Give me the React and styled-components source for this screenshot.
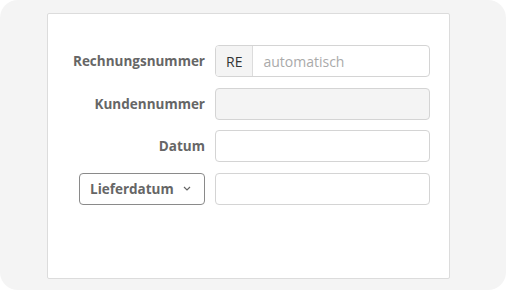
import React from "react";
import styled, { createGlobalStyle } from "styled-components";

const Global = createGlobalStyle`
  html, body { margin: 0; padding: 0; background: #fff; }
  body { font-family: "Open Sans", "Liberation Sans", sans-serif; }
  * { box-sizing: border-box; }
`;

const Frame = styled.div`
  width: 506px;
  height: 290px;
  background: #f4f4f4;
  border-radius: 18px;
  padding: 13px 56px 11px 47px;
`;

const Card = styled.div`
  height: 100%;
  background: #fff;
  border: 1px solid #dcdcdc;
  border-radius: 2px;
  padding: 31px 19px 0 31px;
`;

const Form = styled.div`
  display: grid;
  grid-template-columns: 126px 215px;
  column-gap: 10px;
  row-gap: 10.6px;
  align-items: center;
`;

const Label = styled.label`
  justify-self: end;
  font-size: 13.5px;
  font-weight: 700;
  color: #666;
`;

const Group = styled.div`
  display: flex;
  height: 32px;
  border: 1px solid #d4d4d4;
  border-radius: 4px;
  overflow: hidden;
  background: ${p => (p.disabled ? "#f4f4f4" : "#fff")};
`;

const Addon = styled.span`
  display: flex;
  align-items: center;
  padding: 0 10px;
  background: #f4f4f4;
  border-right: 1px solid #dcdcdc;
  font-size: 14px;
  color: #333;
`;

const Input = styled.input`
  flex: 1;
  min-width: 0;
  border: none;
  outline: none;
  background: transparent;
  padding: 0 10px;
  font-family: inherit;
  font-size: 14px;
  color: #333;
  &::placeholder { color: #aaa; }
`;

const Dropdown = styled.button`
  height: 32px;
  width: 126px;
  display: flex;
  align-items: center;
  gap: 9px;
  padding: 0 10px;
  background: #fff;
  border: 1px solid #8a8a8a;
  border-radius: 4px;
  font-family: inherit;
  font-size: 13.5px;
  font-weight: 700;
  color: #666;
  cursor: pointer;
`;

const Chevron = () => (
  <svg width="8" height="5" viewBox="0 0 8 5" fill="none">
    <path d="M1 1l3 3 3-3" stroke="#666" strokeWidth="1.2" />
  </svg>
);

export default function App() {
  return (
    <>
      <Global />
      <Frame>
        <Card>
          <Form>
            <Label>Rechnungsnummer</Label>
            <Group>
              <Addon>RE</Addon>
              <Input placeholder="automatisch" />
            </Group>

            <Label>Kundennummer</Label>
            <Group disabled>
              <Input disabled />
            </Group>

            <Label>Datum</Label>
            <Group>
              <Input />
            </Group>

            <Dropdown>
              Lieferdatum <Chevron />
            </Dropdown>
            <Group>
              <Input />
            </Group>
          </Form>
        </Card>
      </Frame>
    </>
  );
}
